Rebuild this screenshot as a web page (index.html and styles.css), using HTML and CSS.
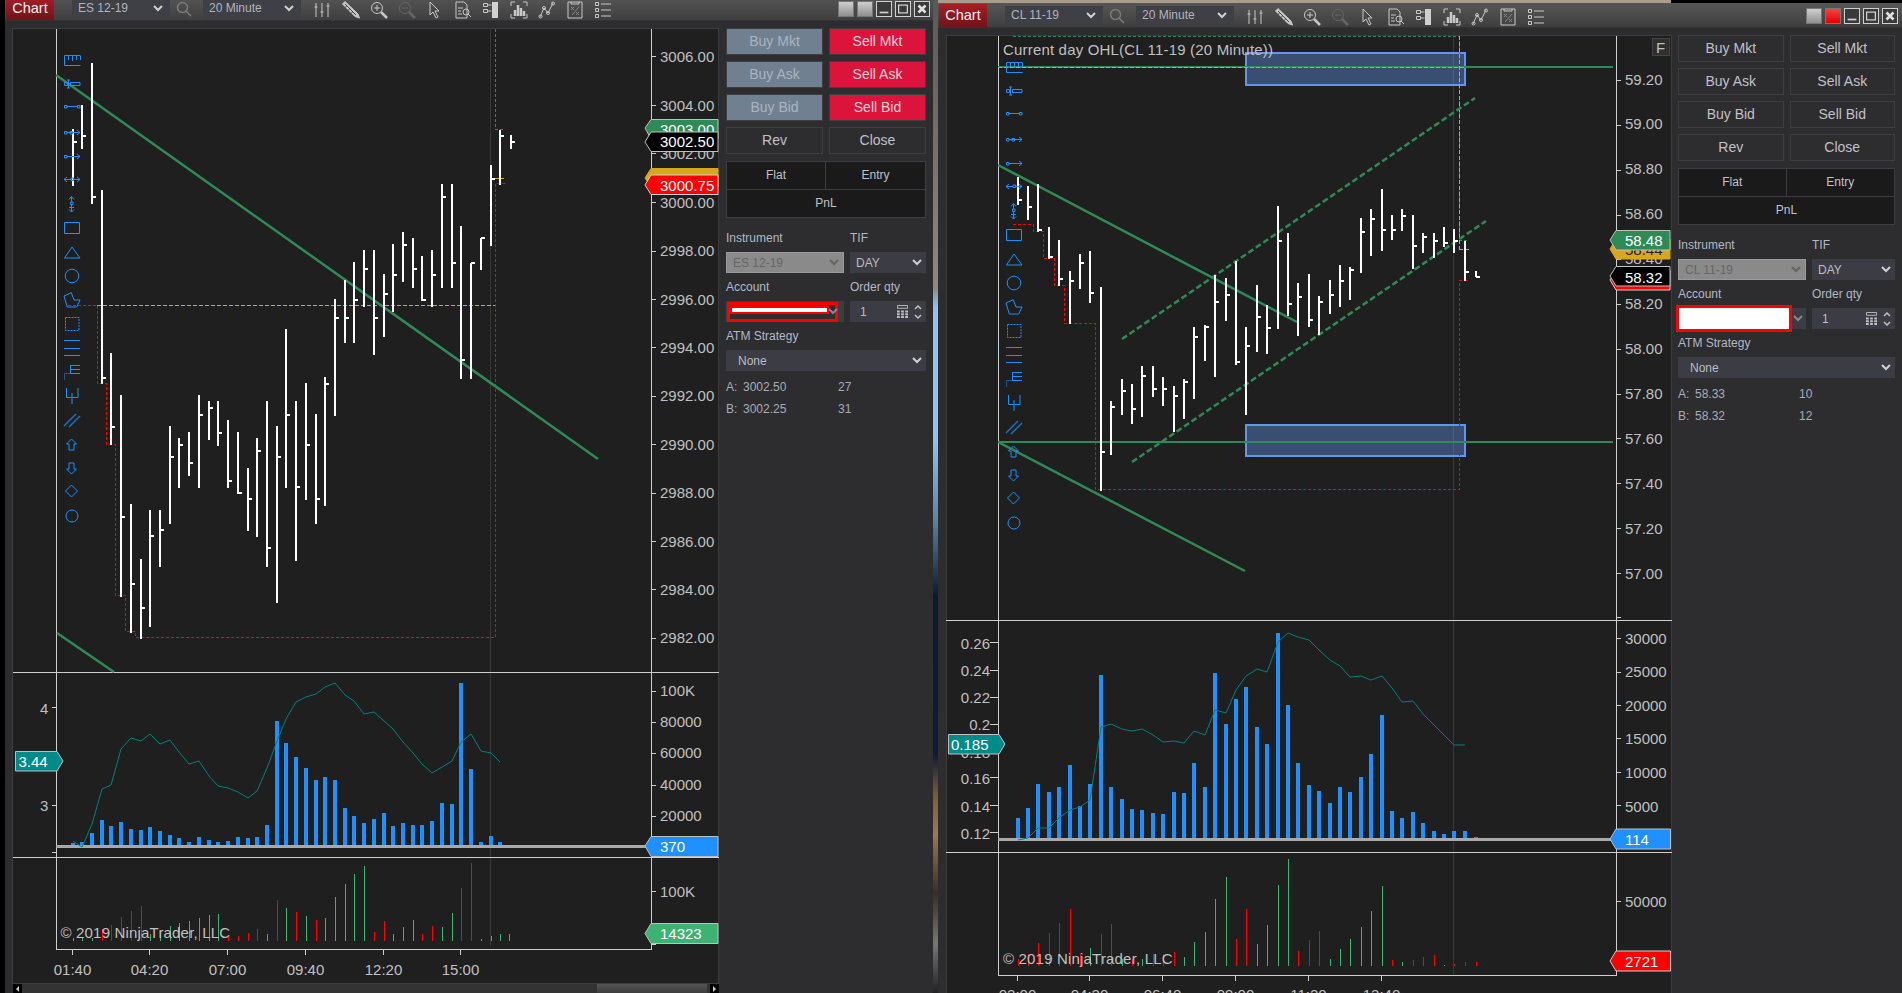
FILE: index.html
```html
<!DOCTYPE html>
<html lang="en">
<head>
<meta charset="utf-8">
<title>NinjaTrader charts</title>
<link rel="stylesheet" href="styles.css">
</head>
<body>
<div class="desktop">
<div class="edge-left"></div>
<div class="edge-top"></div>

<section class="window win-es">
  <header class="toolbar">
    <div class="chart-btn">Chart</div>
    <div class="tb-select first"><span>ES 12-19</span><svg class="chev" viewBox="0 0 10 7"><path d="M1 1l4 4 4-4"/></svg></div>
    <svg class="tb-search" viewBox="0 0 16 16"><circle cx="6.5" cy="6.5" r="5"/><path d="M10 10l5 5"/></svg>
    <div class="tb-select"><span>20 Minute</span><svg class="chev" viewBox="0 0 10 7"><path d="M1 1l4 4 4-4"/></svg></div>
    <div class="tb-icons">
      <svg class="tb-icon" viewBox="0 0 18 18"><path d="M2 2v14M8 2v14M14 2v14M.5 6h3M6.500 11h3M12.500 5h3"/></svg>
      <svg class="tb-icon" viewBox="0 0 18 18"><path class="pencil" d="M.5 3L3 .5l13 12.500 1.500 4-4.500-1.500z"/><path class="hatch" d="M3 3l11 11M4.500 5l-2 2M7.500 8l-2 2M10.500 11l-2 2"/></svg>
      <svg class="tb-icon" viewBox="0 0 18 18"><circle cx="7" cy="7" r="5.500"/><path d="M4 7h6M7 4v6"/><path class="thick" d="M11 11l6 6"/></svg>
      <svg class="tb-icon dim" viewBox="0 0 18 18"><circle cx="7" cy="7" r="5.500"/><path d="M4 7h6"/><path class="thick" d="M11 11l6 6"/></svg>
      <svg class="tb-icon" viewBox="0 0 18 18"><path d="M4 1v13l3-3 3 6 2-1-3-6h4z"/></svg>
      <svg class="tb-icon" viewBox="0 0 18 18"><path d="M2 1h8l3 3v13H2zM4 7h5M4 10h3M4 13h4"/><circle cx="12" cy="11" r="3"/><path d="M14 13l3 3"/></svg>
      <svg class="tb-icon" viewBox="0 0 18 18"><path d="M1.500 2.500h4v3h-4zM1.500 8.500h4v3h-4zM5.500 4h4M5.500 10h4"/><rect class="solid" x="10" y="1" width="6" height="16"/></svg>
      <svg class="tb-icon" viewBox="0 0 18 18"><path d="M1 5V1h4M13 1h4v4M17 13v4h-4M5 17H1v-4"/><path class="thick" d="M5 15V9M8 15V4M11 15V7M14 15V10"/></svg>
      <svg class="tb-icon" viewBox="0 0 18 18"><path d="M2 16l4-9 4 5 5-10"/><circle cx="2.500" cy="15.500" r="1.500"/><circle cx="6" cy="7" r="1.500"/><circle cx="10" cy="12" r="1.500"/><circle cx="15" cy="2.500" r="1.500"/></svg>
      <svg class="tb-icon" viewBox="0 0 18 18"><path d="M2 1h14v16H2zM5 1v2h8V1"/><path d="M5 6l3 3M8 6l-3 3M10 14l3-3M13 14l-3-3M6 14l7-8" class="thin"/></svg>
      <svg class="tb-icon" viewBox="0 0 18 18"><path d="M1.500 1.500h3v3h-3zM1.500 7.500h3v3h-3zM1.500 13.500h3v3h-3zM7 3h10M7 9h10M7 15h10"/></svg>
    </div>
    <div class="win-controls">
      <span class="wc plain"></span><span class="wc plain"></span>
      <span class="wc framed"><svg viewBox="0 0 16 16"><path class="bar" d="M3 11h10v2H3z"/></svg></span>
      <span class="wc framed"><svg viewBox="0 0 16 16"><path class="box" d="M3 3.500h10v9H3z"/></svg></span>
      <span class="wc framed"><svg viewBox="0 0 16 16"><path class="x" d="M4 4l8 8M12 4l-8 8"/></svg></span>
    </div>
  </header>
  <div class="win-body">
    <div class="chart-col">
      <svg class="chart chart-es" viewBox="12 27 707 956">
        <rect class="frame" x="12.500" y="27.500" width="706" height="955"/>
        <path class="gridline" d="M490.500 28V945"/>
        <path class="axis" d="M56.500 28V948H651.500V28M13 671.500H719M13 856.500H719"/>
        <path class="axis" d="M651 55.500h5M651 104h5M651 152.500h5M651 201h5M651 250h5M651 298h5M651 346.500h5M651 395h5M651 443.500h5M651 492h5M651 540h5M651 588.500h5M651 637h5M651 690.500h5M651 721.500h5M651 752.500h5M651 784.500h5M651 815.500h5M651 890.500h5M651 943.500h5M52 706.500h4M52 804.500h4M52 851.500h4M72.500 948v6M149.500 948v6M227.500 948v6M305.500 948v6M383.500 948v6M460.500 948v6"/>

        <path class="ln-dash-red" d="M68 304.500H97.500V382.500H106.500V443.500H115.500V594.500H125.500V630.500H135.500V636.500H495.500V182.500H505"/>
        <path class="ln-dash-gold" d="M97 304.500H495M495 177.500H504"/>
        <path class="ln-dash-green" d="M495.500 28V128.500H504"/>
        <path class="ln-solid" d="M56 74L598 458M57 632L114 671"/>
        <path class="bars" d="M73 128V185M73 141h4M82 104V148M82 135h4M92 62V203M92 196h4M102 189V383M102 377h4M111 352V444M111 426h4M121 394V596M121 516h4M131 503V632M131 583h4M141 558V638M141 607h4M150 509V626M150 535h4M160 509V566M160 529h4M170 425V523M170 456h4M179 437V487M179 444h4M189 431V475M189 462h4M199 394V487M199 414h4M209 400V439M209 407h4M218 400V445M218 432h4M228 419V487M228 480h4M238 431V493M238 492h4M248 467V530M248 498h4M257 437V536M257 450h4M267 400V566M267 547h4M277 425V602M277 456h4M286 328V487M286 414h4M296 400V560M296 486h4M306 382V499M306 444h4M316 413V523M316 498h4M325 376V505M325 383h4M335 298V415M335 317h4M345 279V342M345 317h4M354 261V342M354 299h4M364 249V306M364 268h4M374 249V354M374 317h4M384 273V336M384 293h4M393 243V311M393 274h4M403 231V281M403 244h4M413 237V287M413 268h4M422 255V300M422 299h4M432 249V306M432 274h4M442 183V287M442 196h4M452 183V287M452 262h4M461 225V378M461 359h4M471 262V378M471 262h4M481 237V269M481 237h4M491 164V245M491 178h4M500 129V184M500 135h4M511 134V148M511 141h4"/>

        <g id="tools" class="tools">
          <path d="M64.500 54.500H80.500M64.500 54.500V64.500H80.500M68.500 55v4M72.500 55v5M76.500 55v4M80.500 55v4"/>
          <path d="M64.500 81.500h3v3h-3zM70.500 81.500h9.500v3h-9.500zM68.500 79v8M67 79h3M67 87h3"/>
          <path d="M64.500 104.500h2.500v2.500h-2.500zM77.500 104.500h2.500v2.500h-2.500zM67 105.500H77.500"/>
          <path d="M64.500 130.500h2.500v2.500h-2.500zM70 130.500h2.500v2.500H70zM67 131.500H80M77 129l3 2.500-3 2.500"/>
          <path d="M64.500 154.500h2.500v2.500h-2.500zM67 155.500H80M77 153l3 2.500-3 2.500"/>
          <path d="M71 177h2.500v2.500H71zM64 178.500H71M73.500 178.500H80M67 176l-3 2.500 3 2.500M77 176l3 2.500-3 2.500"/>
          <path d="M70.500 201h2.500v2.500h-2.500zM71.500 196V201M71.500 203.500V211M69 198.500l2.500-3 2.500 3M69 208.500l2.500 2.500 2.500-2.500M69 206.500h5"/>
          <path d="M64.500 221.500h15v11h-15z"/>
          <path d="M64.500 257L72 246l8 11z"/>
          <circle cx="72" cy="275" r="6.800"/>
          <path d="M64 295l7.300-3.300L74 299h6l-3.300 7h-9.400z"/>
          <path class="dotted" d="M65.500 316.500h13.500v13h-13.500z"/>
          <path d="M64 339.500h16M64 347.500h16M64 354.500h16"/>
          <path d="M70 364.500h10M70 368.500h10M70 372.500h10M70.500 364v9"/>
          <path class="dotted-fine" d="M64.500 378.500v-6h6"/>
          <path d="M66.500 387v9.500h11.500V387"/>
          <path class="dark" d="M72 392v11"/>
          <path class="dark" d="M64 425l12-12M69 426l11-11"/>
          <path d="M71.500 438l5 5H74v6h-5v-6h-2.500z"/>
          <path d="M69 462h5v6h2.500l-5 5-5-5H69z"/>
          <path d="M71.500 484l6 6-6 6-6-6z"/>
          <circle cx="72" cy="515" r="6"/>
        </g>

        <path class="vol-blue" d="M73 842V845M82 841V845M92 832V845M102 819V845M111 825V845M121 821V845M131 828V845M141 829V845M150 826V845M160 830V845M170 834V845M179 837V845M189 841V845M199 836V845M209 839V845M218 841V845M228 840V845M238 836V845M248 837V845M257 836V845M267 824V845M277 720V845M286 742V845M296 756V845M306 767V845M316 779V845M325 776V845M335 779V845M345 807V845M354 815V845M364 822V845M374 818V845M384 812V845M393 825V845M403 822V845M413 824V845M422 824V845M432 820V845M442 802V845M452 803V845M461 682V845M471 768V845M481 841V845M491 835V845M500 841V845"/>
        <path class="baseline" d="M56 845H651"/>
        <polyline class="teal" points="73,840 82,846 92,823 102,788 111,784 121,748 131,737 141,740 150,733 160,743 170,739 179,751 189,763 199,760 209,775 218,785 228,787 238,791 248,797 257,790 267,767 277,740 286,718 296,701 306,696 316,693 325,686 335,682 345,694 354,700 364,713 374,711 384,720 393,728 403,741 413,752 422,763 432,772 442,766 452,760 461,741 471,733 481,750 491,752 500,761"/>
        <path class="vol-g" d="M73.500 937V940M82.500 937V940M92.500 937V940M150.500 933V940M160.500 932V940M170.500 925V940M179.500 922V940M189.500 920V940M199.500 917V940M209.500 914V940M218.500 913V940M267.500 933V940M286.500 907V940M306.500 915V940M325.500 917V940M335.500 896V940M345.500 883V940M354.500 873V940M364.500 865V940M393.500 933V940M403.500 926V940M413.500 919V940M442.500 926V940M452.500 912V940M481.500 938V940M491.500 935V940M500.500 933V940M509.500 933V940"/>
        <path class="vol-r" d="M102.500 928V940M111.500 924V940M121.500 916V940M131.500 910V940M141.500 905V940M228.500 935V940M238.500 935V940M248.500 932V940M257.500 928V940M277.500 899V940M296.500 911V940M316.500 919V940M374.500 931V940M384.500 920V940M422.500 933V940M432.500 925V940M461.500 887V940M471.500 862V940"/>

        <text class="t" x="660" y="61">3006.00</text>
        <text class="t" x="660" y="110">3004.00</text>
        <text class="t" x="660" y="158">3002.00</text>
        <text class="t" x="660" y="207">3000.00</text>
        <text class="t" x="660" y="255">2998.00</text>
        <text class="t" x="660" y="304">2996.00</text>
        <text class="t" x="660" y="352">2994.00</text>
        <text class="t" x="660" y="400">2992.00</text>
        <text class="t" x="660" y="449">2990.00</text>
        <text class="t" x="660" y="497">2988.00</text>
        <text class="t" x="660" y="546">2986.00</text>
        <text class="t" x="660" y="594">2984.00</text>
        <text class="t" x="660" y="642">2982.00</text>

        <polygon class="m-green" points="645,127 651,118.500 718,118.500 718,138 651,138"/>
        <text class="t white" x="660" y="134">3003.00</text>
        <polygon class="m-black" points="645,141 651,131 718,131 718,150.500 651,150.500"/>
        <text class="t white" x="660" y="146">3002.50</text>
        <polygon class="m-gold" points="645,177 651,167.500 718,167.500 718,186 651,186"/>
        <polygon class="m-red" points="645,184 651,174 718,174 718,193.500 651,193.500"/>
        <text class="t white" x="660" y="189.500">3000.75</text>

        <text class="t" x="40" y="713">4</text>
        <text class="t" x="40" y="810">3</text>
        <polygon class="m-teal" points="15.500,750.500 57,750.500 63,760 57,770 15.500,770"/>
        <text class="t white" x="18.500" y="766">3.44</text>

        <text class="t" x="660" y="695">100K</text>
        <text class="t" x="660" y="726">80000</text>
        <text class="t" x="660" y="757">60000</text>
        <text class="t" x="660" y="789">40000</text>
        <text class="t" x="660" y="820">20000</text>
        <polygon class="m-blue" points="645,845 651,835.500 718,835.500 718,855.500 651,855.500"/>
        <text class="t white" x="660" y="851">370</text>
        <text class="t" x="660" y="896">100K</text>
        <polygon class="m-vol" points="645,932.500 651,922.500 718,922.500 718,942.500 651,942.500"/>
        <text class="t white" x="660" y="938">14323</text>

        <text class="t wide" x="60.500" y="937">© 2019 NinjaTrader, LLC</text>
        <text class="t mid" x="72.500" y="974">01:40</text>
        <text class="t mid" x="149.500" y="974">04:20</text>
        <text class="t mid" x="227.500" y="974">07:00</text>
        <text class="t mid" x="305.500" y="974">09:40</text>
        <text class="t mid" x="383.500" y="974">12:20</text>
        <text class="t mid" x="460.500" y="974">15:00</text>
      </svg>
      <div class="scrollbar"><span class="sb-end"><i class="arrow-l"></i></span><span class="sb-track"></span><span class="sb-thumb"></span><span class="sb-end end-r"><i class="arrow-r"></i></span></div>
    </div>

    <aside class="panel panel-es">
      <div class="btn-grid">
        <button class="btn buy">Buy Mkt</button><button class="btn sell">Sell Mkt</button>
        <button class="btn buy">Buy Ask</button><button class="btn sell">Sell Ask</button>
        <button class="btn buy">Buy Bid</button><button class="btn sell">Sell Bid</button>
        <button class="btn">Rev</button><button class="btn">Close</button>
      </div>
      <div class="pos-table">
        <div class="pos-cell">Flat</div><div class="pos-cell">Entry</div><div class="pos-cell wide">PnL</div>
      </div>
      <div class="form-row">
        <div class="field"><label>Instrument</label><div class="sel disabled"><span>ES 12-19</span><svg class="chev" viewBox="0 0 10 7"><path d="M1 1l4 4 4-4"/></svg></div></div>
        <div class="field"><label>TIF</label><div class="sel"><span>DAY</span><svg class="chev" viewBox="0 0 10 7"><path d="M1 1l4 4 4-4"/></svg></div></div>
      </div>
      <div class="form-row">
        <div class="field"><label>Account</label><div class="sel acct acct-es"><div class="acct-red"><div class="acct-inner"></div></div><svg class="chev dimchev" viewBox="0 0 10 7"><path d="M1 1l4 4 4-4"/></svg></div></div>
        <div class="field"><label>Order qty</label><div class="sel qty"><span class="qty-val">1</span>
          <svg class="calc" viewBox="0 0 12 14"><path d="M.5.500h11v3H.5z"/><path class="calc-dots" d="M0 6h3v2H0zM4.500 6h3v2h-3zM9 6h3v2H9zM0 9h3v2H0zM4.500 9h3v2h-3zM9 9h3v2H9zM0 12h3v2H0zM4.500 12h3v2h-3zM9 12h3v2H9z"/></svg>
          <svg class="spin" viewBox="0 0 8 14"><path d="M1 4l3-3 3 3M1 10l3 3 3-3"/></svg></div></div>
      </div>
      <div class="field atm"><label>ATM Strategy</label><div class="sel none"><span>None</span><svg class="chev" viewBox="0 0 10 7"><path d="M1 1l4 4 4-4"/></svg></div></div>
      <div class="quote"><span>A:</span><span>3002.50</span><span>27</span></div>
      <div class="quote"><span>B:</span><span>3002.25</span><span>31</span></div>
    </aside>
  </div>
</section>

<section class="window win-cl">
  <header class="toolbar">
    <div class="chart-btn">Chart</div>
    <div class="tb-select first"><span>CL 11-19</span><svg class="chev" viewBox="0 0 10 7"><path d="M1 1l4 4 4-4"/></svg></div>
    <svg class="tb-search" viewBox="0 0 16 16"><circle cx="6.5" cy="6.5" r="5"/><path d="M10 10l5 5"/></svg>
    <div class="tb-select"><span>20 Minute</span><svg class="chev" viewBox="0 0 10 7"><path d="M1 1l4 4 4-4"/></svg></div>
    <div class="tb-icons">
      <svg class="tb-icon" viewBox="0 0 18 18"><path d="M2 2v14M8 2v14M14 2v14M.5 6h3M6.500 11h3M12.500 5h3"/></svg>
      <svg class="tb-icon" viewBox="0 0 18 18"><path class="pencil" d="M.5 3L3 .5l13 12.500 1.500 4-4.500-1.500z"/><path class="hatch" d="M3 3l11 11M4.500 5l-2 2M7.500 8l-2 2M10.500 11l-2 2"/></svg>
      <svg class="tb-icon" viewBox="0 0 18 18"><circle cx="7" cy="7" r="5.500"/><path d="M4 7h6M7 4v6"/><path class="thick" d="M11 11l6 6"/></svg>
      <svg class="tb-icon dim" viewBox="0 0 18 18"><circle cx="7" cy="7" r="5.500"/><path d="M4 7h6"/><path class="thick" d="M11 11l6 6"/></svg>
      <svg class="tb-icon" viewBox="0 0 18 18"><path d="M4 1v13l3-3 3 6 2-1-3-6h4z"/></svg>
      <svg class="tb-icon" viewBox="0 0 18 18"><path d="M2 1h8l3 3v13H2zM4 7h5M4 10h3M4 13h4"/><circle cx="12" cy="11" r="3"/><path d="M14 13l3 3"/></svg>
      <svg class="tb-icon" viewBox="0 0 18 18"><path d="M1.500 2.500h4v3h-4zM1.500 8.500h4v3h-4zM5.500 4h4M5.500 10h4"/><rect class="solid" x="10" y="1" width="6" height="16"/></svg>
      <svg class="tb-icon" viewBox="0 0 18 18"><path d="M1 5V1h4M13 1h4v4M17 13v4h-4M5 17H1v-4"/><path class="thick" d="M5 15V9M8 15V4M11 15V7M14 15V10"/></svg>
      <svg class="tb-icon" viewBox="0 0 18 18"><path d="M2 16l4-9 4 5 5-10"/><circle cx="2.500" cy="15.500" r="1.500"/><circle cx="6" cy="7" r="1.500"/><circle cx="10" cy="12" r="1.500"/><circle cx="15" cy="2.500" r="1.500"/></svg>
      <svg class="tb-icon" viewBox="0 0 18 18"><path d="M2 1h14v16H2zM5 1v2h8V1"/><path d="M5 6l3 3M8 6l-3 3M10 14l3-3M13 14l-3-3M6 14l7-8" class="thin"/></svg>
      <svg class="tb-icon" viewBox="0 0 18 18"><path d="M1.500 1.500h3v3h-3zM1.500 7.500h3v3h-3zM1.500 13.500h3v3h-3zM7 3h10M7 9h10M7 15h10"/></svg>
    </div>
    <div class="win-controls">
      <span class="wc plain"></span><span class="wc red"></span>
      <span class="wc framed"><svg viewBox="0 0 16 16"><path class="bar" d="M3 11h10v2H3z"/></svg></span>
      <span class="wc framed"><svg viewBox="0 0 16 16"><path class="box" d="M3 3.500h10v9H3z"/></svg></span>
      <span class="wc framed"><svg viewBox="0 0 16 16"><path class="x" d="M4 4l8 8M12 4l-8 8"/></svg></span>
    </div>
  </header>
  <div class="win-body">
    <div class="chart-col">
      <svg class="chart chart-cl" viewBox="946 34 726 959">
        <rect class="frame" x="946.500" y="34.500" width="725" height="959"/>
        <path class="gridline" d="M1453.500 35V974"/>
        <path class="axis" d="M998.500 35V974.500H1616.500V35M946 619.500H1672M946 851.500H1672"/>
        <path class="axis" d="M1616 79.500h5M1616 124.500h5M1616 169.500h5M1616 214.500h5M1616 258.500h5M1616 303.500h5M1616 348.500h5M1616 393.500h5M1616 437.500h5M1616 482.500h5M1616 527.500h5M1616 572.500h5M1616 616.500h5M1616 637.500h5M1616 671.500h5M1616 704.500h5M1616 737.500h5M1616 771.500h5M1616 804.500h5M1616 900.500h5M990 641.500h8M990 669.500h8M990 696.500h8M990 723.500h8M990 776.500h8M990 804.500h8M990 831.500h8M1017.500 974v6M1089.500 974v6M1162.500 974v6M1235.500 974v6M1308.500 974v6M1381.500 974v6"/>

        <rect class="zone" x="1246" y="52" width="219" height="32"/>
        <rect class="zone" x="1246" y="424" width="219" height="31"/>
        <path class="ln-dash-green" d="M1013 35.500H1459M1459.500 35V239M1459 239.500H1469"/>
        <path class="ln-dash-red" d="M1013 223.500H1033.500V230.500H1043.500V257.500H1054.500V284.500H1064.500V322.500H1095.500V488.500H1459.500V279.500H1469"/>
        <path class="ln-h" d="M998 66H1613M998 441H1613"/>
        <path class="ln-dash-gold" d="M998 66.500H1465M1459.500 35V248M1459 248.500H1469"/>
        <path class="ln-solid" d="M998 164L1297 321M998 441L1245 570"/>
        <path class="ln-channel" d="M1122 338L1475 97M1132 461L1486 220"/>
        <path class="bars" d="M1018 176V204M1018 199h4M1028 185V219M1028 206h4M1038 183V231M1038 229h4M1049 226V258M1049 256h4M1059 239V285M1059 278h4M1070 270V323M1070 280h4M1080 253V288M1080 262h4M1090 250V302M1090 292h4M1101 286V490M1101 451h4M1111 400V454M1111 406h4M1122 378V414M1122 390h4M1132 383V423M1132 408h4M1142 365V416M1142 375h4M1153 365V396M1153 388h4M1163 376V405M1163 388h4M1174 385V431M1174 395h4M1184 378V418M1184 381h4M1194 326V398M1194 336h4M1205 324V360M1205 326h4M1215 274V376M1215 301h4M1226 277V320M1226 294h4M1236 260V364M1236 361h4M1246 326V414M1246 345h4M1257 284V351M1257 316h4M1267 304V353M1267 327h4M1278 205V328M1278 240h4M1288 232V315M1288 303h4M1298 282V335M1298 296h4M1309 273V326M1309 319h4M1319 295V334M1319 301h4M1330 279V313M1330 294h4M1340 264V306M1340 280h4M1350 266V299M1350 269h4M1361 217V272M1361 231h4M1371 208V255M1371 218h4M1382 188V250M1382 229h4M1392 214V239M1392 229h4M1402 208V230M1402 215h4M1413 214V268M1413 245h4M1423 232V252M1423 236h4M1434 232V257M1434 240h4M1444 226V246M1444 242h4M1454 228V252M1454 240h4M1465 240V280M1465 271h4M1476 270V276M1476 276h4"/>

        <use href="#tools" transform="translate(942,7)"/>

        <path class="vol-blue" d="M1018 817V838M1028 807V838M1038 783V838M1049 791V838M1059 786V838M1070 764V838M1080 805V838M1090 783V838M1101 674V838M1111 786V838M1122 798V838M1132 808V838M1142 809V838M1153 812V838M1163 813V838M1174 791V838M1184 792V838M1194 762V838M1205 786V838M1215 672V838M1226 723V838M1236 698V838M1246 686V838M1257 726V838M1267 743V838M1278 632V838M1288 704V838M1298 762V838M1309 784V838M1319 790V838M1330 802V838M1340 786V838M1350 791V838M1361 776V838M1371 753V838M1382 714V838M1392 810V838M1402 817V838M1413 811V838M1423 822V838M1434 830V838M1444 833V838M1454 830V838M1465 830V838M1476 836V838"/>
        <path class="baseline" d="M998 838.500H1616"/>
        <polyline class="teal" points="1018,839 1028,837 1038,827 1049,827 1059,817 1070,809 1080,806 1090,799 1101,726 1111,723 1122,728 1132,730 1142,728 1153,734 1163,741 1174,740 1184,742 1194,730 1205,734 1215,709 1226,712 1236,689 1246,675 1257,668 1267,671 1278,641 1288,632 1298,636 1309,639 1319,649 1330,659 1340,665 1350,676 1361,675 1371,679 1382,675 1392,687 1402,701 1413,700 1423,713 1434,724 1444,734 1454,744 1465,744"/>
        <path class="vol-g" d="M1090.500 947V965M1122.500 958V965M1142.500 958V965M1184.500 956V965M1194.500 941V965M1205.500 931V965M1215.500 898V965M1226.500 876V965M1257.500 943V965M1267.500 924V965M1278.500 884V965M1288.500 858V965M1330.500 958V965M1340.500 948V965M1350.500 938V965M1361.500 926V965M1371.500 910V965M1382.500 885V965M1402.500 961V965M1444.500 964V965"/>
        <path class="vol-r" d="M1018.500 958V965M1028.500 953V965M1038.500 942V965M1049.500 932V965M1059.500 922V965M1070.500 908V965M1080.500 953V965M1101.500 933V965M1111.500 923V965M1132.500 958V965M1153.500 953V965M1163.500 953V965M1174.500 951V965M1236.500 938V965M1246.500 908V965M1298.500 950V965M1309.500 939V965M1319.500 930V965M1392.500 959V965M1413.500 959V965M1423.500 956V965M1434.500 954V965M1454.500 963V965M1465.500 961V965M1476.500 961V965"/>

        <text class="t wide" x="1003" y="54">Current day OHL(CL 11-19 (20 Minute))</text>
        <text class="t" x="1625" y="84">59.20</text>
        <text class="t" x="1625" y="128">59.00</text>
        <text class="t" x="1625" y="173">58.80</text>
        <text class="t" x="1625" y="218">58.60</text>
        <text class="t" x="1625" y="263">58.40</text>
        <text class="t" x="1625" y="308">58.20</text>
        <text class="t" x="1625" y="353">58.00</text>
        <text class="t" x="1625" y="398">57.80</text>
        <text class="t" x="1625" y="443">57.60</text>
        <text class="t" x="1625" y="488">57.40</text>
        <text class="t" x="1625" y="533">57.20</text>
        <text class="t" x="1625" y="578">57.00</text>

        <polygon class="m-gold" points="1610,248 1616,238 1670,238 1670,258 1616,258"/>
        <text class="t dark" x="1625" y="254">58.44</text>
        <polygon class="m-green" points="1610,239 1616,229.500 1670,229.500 1670,249 1616,249"/>
        <text class="t white" x="1625" y="245">58.48</text>
        <polygon class="m-red" points="1610,279 1616,269 1670,269 1670,289 1616,289"/>
        <polygon class="m-black" points="1610,275 1616,265.500 1670,265.500 1670,285 1616,285"/>
        <text class="t white" x="1625" y="282">58.32</text>

        <g>
          <rect class="f-box" x="1652.500" y="37.500" width="17" height="17"/>
          <text class="t" x="1656" y="52">F</text>
        </g>

        <text class="t end" x="990" y="648">0.26</text>
        <text class="t end" x="990" y="675">0.24</text>
        <text class="t end" x="990" y="702">0.22</text>
        <text class="t end" x="990" y="729">0.2</text>
        <text class="t end" x="990" y="757">0.18</text>
        <text class="t end" x="990" y="783">0.16</text>
        <text class="t end" x="990" y="811">0.14</text>
        <text class="t end" x="990" y="838">0.12</text>
        <polygon class="m-teal" points="948.500,733.500 999,733.500 1005,743 999,753 948.500,753"/>
        <text class="t white" x="951" y="749">0.185</text>

        <text class="t" x="1625" y="643">30000</text>
        <text class="t" x="1625" y="676">25000</text>
        <text class="t" x="1625" y="710">20000</text>
        <text class="t" x="1625" y="743">15000</text>
        <text class="t" x="1625" y="777">10000</text>
        <text class="t" x="1625" y="811">5000</text>
        <polygon class="m-blue" points="1610,838 1616,828 1670.500,828 1670.500,848 1616,848"/>
        <text class="t white" x="1625" y="844">114</text>
        <text class="t" x="1625" y="906">50000</text>
        <polygon class="m-red" points="1610,960 1616,950 1670.500,950 1670.500,970 1616,970"/>
        <text class="t white" x="1625" y="966">2721</text>

        <text class="t wide" x="1003" y="963">© 2019 NinjaTrader, LLC</text>
        <text class="t mid" x="1017.500" y="999">02:00</text>
        <text class="t mid" x="1089.500" y="999">04:20</text>
        <text class="t mid" x="1162.500" y="999">06:40</text>
        <text class="t mid" x="1235.500" y="999">09:00</text>
        <text class="t mid" x="1308.500" y="999">11:20</text>
        <text class="t mid" x="1381.500" y="999">13:40</text>
      </svg>
    </div>

    <aside class="panel panel-cl">
      <div class="btn-grid">
        <button class="btn">Buy Mkt</button><button class="btn">Sell Mkt</button>
        <button class="btn">Buy Ask</button><button class="btn">Sell Ask</button>
        <button class="btn">Buy Bid</button><button class="btn">Sell Bid</button>
        <button class="btn">Rev</button><button class="btn">Close</button>
      </div>
      <div class="pos-table">
        <div class="pos-cell">Flat</div><div class="pos-cell">Entry</div><div class="pos-cell wide">PnL</div>
      </div>
      <div class="form-row">
        <div class="field"><label>Instrument</label><div class="sel disabled"><span>CL 11-19</span><svg class="chev" viewBox="0 0 10 7"><path d="M1 1l4 4 4-4"/></svg></div></div>
        <div class="field"><label>TIF</label><div class="sel"><span>DAY</span><svg class="chev" viewBox="0 0 10 7"><path d="M1 1l4 4 4-4"/></svg></div></div>
      </div>
      <div class="form-row">
        <div class="field"><label>Account</label><div class="sel acct"><div class="acct-white"></div><svg class="chev dimchev" viewBox="0 0 10 7"><path d="M1 1l4 4 4-4"/></svg></div></div>
        <div class="field"><label>Order qty</label><div class="sel qty"><span class="qty-val">1</span>
          <svg class="calc" viewBox="0 0 12 14"><path d="M.5.500h11v3H.5z"/><path class="calc-dots" d="M0 6h3v2H0zM4.500 6h3v2h-3zM9 6h3v2H9zM0 9h3v2H0zM4.500 9h3v2h-3zM9 9h3v2H9zM0 12h3v2H0zM4.500 12h3v2h-3zM9 12h3v2H9z"/></svg>
          <svg class="spin" viewBox="0 0 8 14"><path d="M1 4l3-3 3 3M1 10l3 3 3-3"/></svg></div></div>
      </div>
      <div class="field atm"><label>ATM Strategy</label><div class="sel none"><span>None</span><svg class="chev" viewBox="0 0 10 7"><path d="M1 1l4 4 4-4"/></svg></div></div>
      <div class="quote"><span>A:</span><span>58.33</span><span>10</span></div>
      <div class="quote"><span>B:</span><span>58.32</span><span>12</span></div>
    </aside>
  </div>
</section>
</div>
</body>
</html>
```

FILE: styles.css
```css
* { box-sizing: border-box; }
html, body { margin: 0; padding: 0; height: 100%; overflow: hidden; background: #000; }
body { font-family: "Liberation Sans", Arial, sans-serif; }

.desktop {
  position: relative;
  width: 1902px;
  height: 993px;
  overflow: hidden;
  background: linear-gradient(#5a5855 0, #8c8880 28%, #8a8a84 29%, #8fc3f5 31%, #8fc3f5 44%, #5f86ad 52%, #0b1a30 60%, #0c1c38 76%, #7a5a3a 80%, #9a7a52 84%, #3a2e22 90%, #777 95%, #222 100%);
}
.edge-left { position: absolute; left: 0; top: 0; width: 5px; height: 993px; background: #000; }
.edge-top { position: absolute; left: 938px; top: 0; width: 964px; height: 3px; background: linear-gradient(90deg, #a89c8a 0, #a89c8a 76%, #000 76%, #000 100%); }

.window { position: absolute; display: flex; flex-direction: column; background: #2d2d30; overflow: hidden; }
.win-es { left: 5px; top: -4px; width: 928px; height: 997px; }
.win-cl { left: 938px; top: 3px; width: 964px; height: 990px; }

.toolbar {
  flex: 0 0 24px;
  display: flex;
  align-items: flex-start;
  background: linear-gradient(#565656, #3f3f3f);
  border-bottom: 1px solid #333;
}
.win-es .toolbar { padding: 0 3px 0 1px; }
.win-cl .toolbar { padding: 0 4px 0 1px; }

.chart-btn {
  width: 48px;
  height: 23px;
  margin-top: 1px;
  background: linear-gradient(#a81e28, #701418);
  color: #f8f0f0;
  font-size: 14.5px;
  line-height: 22px;
  text-align: center;
}
.tb-select {
  width: 98px;
  height: 19px;
  margin-top: 3px;
  padding: 0 7px 0 6px;
  background: #3f3f46;
  color: #b4b4bc;
  font-size: 12px;
  line-height: 19px;
  display: flex;
  justify-content: space-between;
  align-items: center;
}
.tb-select.first { margin-left: 18px; }
.chev { width: 10px; height: 7px; fill: none; stroke: #d0d0d0; stroke-width: 2; }
.tb-search { width: 16px; height: 16px; margin: 5px 11px 0 6px; fill: none; stroke: #7c7c7c; stroke-width: 1.500; flex: none; }

.tb-icons { display: flex; gap: 10px; margin: 5px 0 0 13px; }
.tb-icon { width: 18px; height: 18px; fill: none; stroke: #c8c8c8; stroke-width: 1; flex: none; }
.tb-icon .thick { stroke-width: 2.500; }
.tb-icon .thin { stroke: #888; }
.tb-icon .solid { fill: #d0d0d0; stroke: none; }
.tb-icon .pencil { fill: #c8c8c8; stroke: #c8c8c8; }
.tb-icon .hatch { stroke: #4a4a4a; }
.tb-icon.dim { stroke: #666; }

.win-controls { display: flex; gap: 3px; margin: 5px 0 0 auto; }
.wc { display: block; width: 16px; height: 16px; }
.wc svg { display: block; width: 14px; height: 14px; }
.wc.plain { background: linear-gradient(#cfcfcf, #8f8f8f); border: 1px solid #777; }
.wc.red { background: linear-gradient(#ff4040, #e00000); border: 1px solid #777; }
.wc.framed { border: 1px solid #d0d0d0; background: #3a3a3a; }
.bar { fill: #d0d0d0; }
.box { fill: none; stroke: #d0d0d0; stroke-width: 1.500; }
.x { fill: none; stroke: #e0e0e0; stroke-width: 3; }

.win-body { flex: 1; display: flex; align-items: flex-start; padding-top: 7px; }
.win-es .win-body { padding-left: 7px; }
.win-cl .win-body { padding-left: 8px; }

.chart-col { display: flex; flex-direction: column; flex: none; }
.chart { display: block; background: #1f1f1f; }
.chart-es { width: 707px; height: 956px; }
.chart-cl { width: 726px; height: 959px; }

.frame { fill: none; stroke: #3c3c3c; }
.gridline { fill: none; stroke: #383838; shape-rendering: crispEdges; }
.axis { fill: none; stroke: #cfcfcf; shape-rendering: crispEdges; }
.bars { fill: none; stroke: #fff; stroke-width: 2; shape-rendering: crispEdges; }
.ln-solid { fill: none; stroke: #2e8b57; stroke-width: 2.500; }
.ln-h { fill: none; stroke: #2e8b57; stroke-width: 2; shape-rendering: crispEdges; }
.ln-channel { fill: none; stroke: #2e8b57; stroke-width: 2.500; stroke-dasharray: 6 3; }
.ln-dash-red { fill: none; stroke: #f00; stroke-dasharray: 3 2; shape-rendering: crispEdges; }
.ln-dash-gold { fill: none; stroke: #daa520; stroke-dasharray: 4 2; shape-rendering: crispEdges; }
.ln-dash-green { fill: none; stroke: #2e8b57; stroke-dasharray: 3 2; shape-rendering: crispEdges; }
.zone { fill: rgba(100, 149, 237, .4); stroke: #6495ed; stroke-width: 2; shape-rendering: crispEdges; }

.tools { fill: none; stroke: #1e90ff; stroke-width: 1; }
.tools .dotted { stroke-dasharray: 2 1; }
.tools .dotted-fine { stroke-dasharray: 1 1; }
.tools .dark { stroke: #1a6fc0; stroke-width: 1.500; }

.vol-blue { fill: none; stroke: #1e90ff; stroke-width: 4; shape-rendering: crispEdges; }
.baseline { fill: none; stroke: #a9a9a9; stroke-width: 3; shape-rendering: crispEdges; }
.teal { fill: none; stroke: #008080; stroke-width: 1; }
.vol-g { fill: none; stroke: #3cb371; shape-rendering: crispEdges; }
.vol-r { fill: none; stroke: #f00; shape-rendering: crispEdges; }

.t { font: 15px "Liberation Sans", Arial, sans-serif; fill: #c0c0c0; }
.t.white { fill: #fff; }
.t.dark { fill: #222; }
.t.mid { text-anchor: middle; }
.t.end { text-anchor: end; }
.t.wide { letter-spacing: .18px; }

.m-green { fill: #2e8b57; stroke: #c0c0c0; }
.m-black { fill: #000; stroke: #c0c0c0; }
.m-gold { fill: #daa520; stroke: #daa520; }
.m-red { fill: #f00; stroke: #d0d0d0; }
.m-teal { fill: #008b8b; stroke: #c0c0c0; }
.m-blue { fill: #1e90ff; stroke: #c0c0c0; }
.m-vol { fill: #3cb371; stroke: #c0c0c0; }
.f-box { fill: #2f2f2f; stroke: #444; }

.scrollbar { height: 10px; width: 706px; margin-left: 1px; display: flex; background: #333; }
.sb-end { flex: 0 0 9px; background: #000; display: flex; align-items: center; justify-content: center; }
.sb-track { flex: 0 0 575px; }
.sb-thumb { flex: 0 0 110px; background: linear-gradient(#555, #3a3a3a); }
.end-r { margin-left: 3px; }
.arrow-l { border: 3px solid transparent; border-right-color: #ccc; border-left-width: 0; }
.arrow-r { border: 3px solid transparent; border-left-color: #ccc; border-right-width: 0; }

.panel { flex: none; color: #bcbcc2; font-size: 12px; }
.panel-es { width: 200px; margin-left: 7px; }
.panel-cl { width: 217px; margin-left: 6px; }

.btn-grid { display: grid; grid-template-columns: 1fr 1fr; grid-auto-rows: 27px; gap: 6px; }
.btn {
  font: 14px "Liberation Sans", Arial, sans-serif;
  padding: 0 0 2px;
  color: #c0c0c6;
  background: #2d2d30;
  border: 1px solid #3e3e42;
}
.btn.buy { background: #708090; color: #aab4c0; }
.btn.sell { background: #dc143c; color: #f0d4d8; }

.pos-table {
  display: grid;
  grid-template-columns: 1fr 1fr;
  grid-auto-rows: 28px;
  height: 57px;
  margin-top: 7px;
  background: #1a1a1a;
  border: 1px solid #3e3e42;
}
.pos-cell { color: #c0c0c6; line-height: 27px; text-align: center; border-bottom: 1px solid #3e3e42; }
.pos-cell:first-child { border-right: 1px solid #3e3e42; }
.pos-cell.wide { grid-column: 1 / 3; border-bottom: 0; }

.form-row { display: grid; gap: 6px; margin-bottom: 7px; }
.panel-es .form-row { grid-template-columns: 118px 76px; }
.panel-cl .form-row { grid-template-columns: 128px 83px; }
.pos-table + .form-row { margin-top: 13px; }
.field label { display: block; height: 14px; line-height: 14px; margin-bottom: 7px; color: #b4b8c0; }
.sel {
  height: 21px;
  padding: 0 4px 0 6px;
  background: #3c3c44;
  color: #bcbcc2;
  display: flex;
  justify-content: space-between;
  align-items: center;
}
.sel.disabled { background: #8a8a8a; color: #666; border: 1px solid #9a9a9a; }
.sel.disabled .chev { stroke: #666; }
.sel.none { padding-left: 12px; }
.atm { margin-bottom: 5px; }
.acct { position: relative; padding: 0 3px 0 0; justify-content: flex-end; }
.acct-es { padding-right: 6px; }
.dimchev { stroke: #888; position: relative; }
.acct-red { position: absolute; left: 1px; top: 1px; width: 111px; height: 20px; border: 3px solid #f00; background: #2d2d30; }
.acct-inner { width: 99px; height: 8px; margin-top: 1px; border: 2px solid #f00; background: #fff; }
.acct-white { position: absolute; left: -2px; top: -3px; width: 116px; height: 27px; border: 3px solid #f00; background: #fff; }
.qty { padding: 0 4px 0 10px; justify-content: flex-start; }
.qty-val { margin-right: auto; }
.calc { width: 11px; height: 13px; fill: none; stroke: #c0c0c0; margin-right: 6px; }
.calc-dots { fill: #c0c0c0; stroke: none; }
.spin { width: 8px; height: 14px; fill: none; stroke: #c0c0c0; stroke-width: 1.500; }

.quote { display: grid; height: 22px; line-height: 22px; color: #a8acb4; }
.panel-es .quote { grid-template-columns: 17px 95px auto; }
.panel-cl .quote { grid-template-columns: 17px 104px auto; }
```
